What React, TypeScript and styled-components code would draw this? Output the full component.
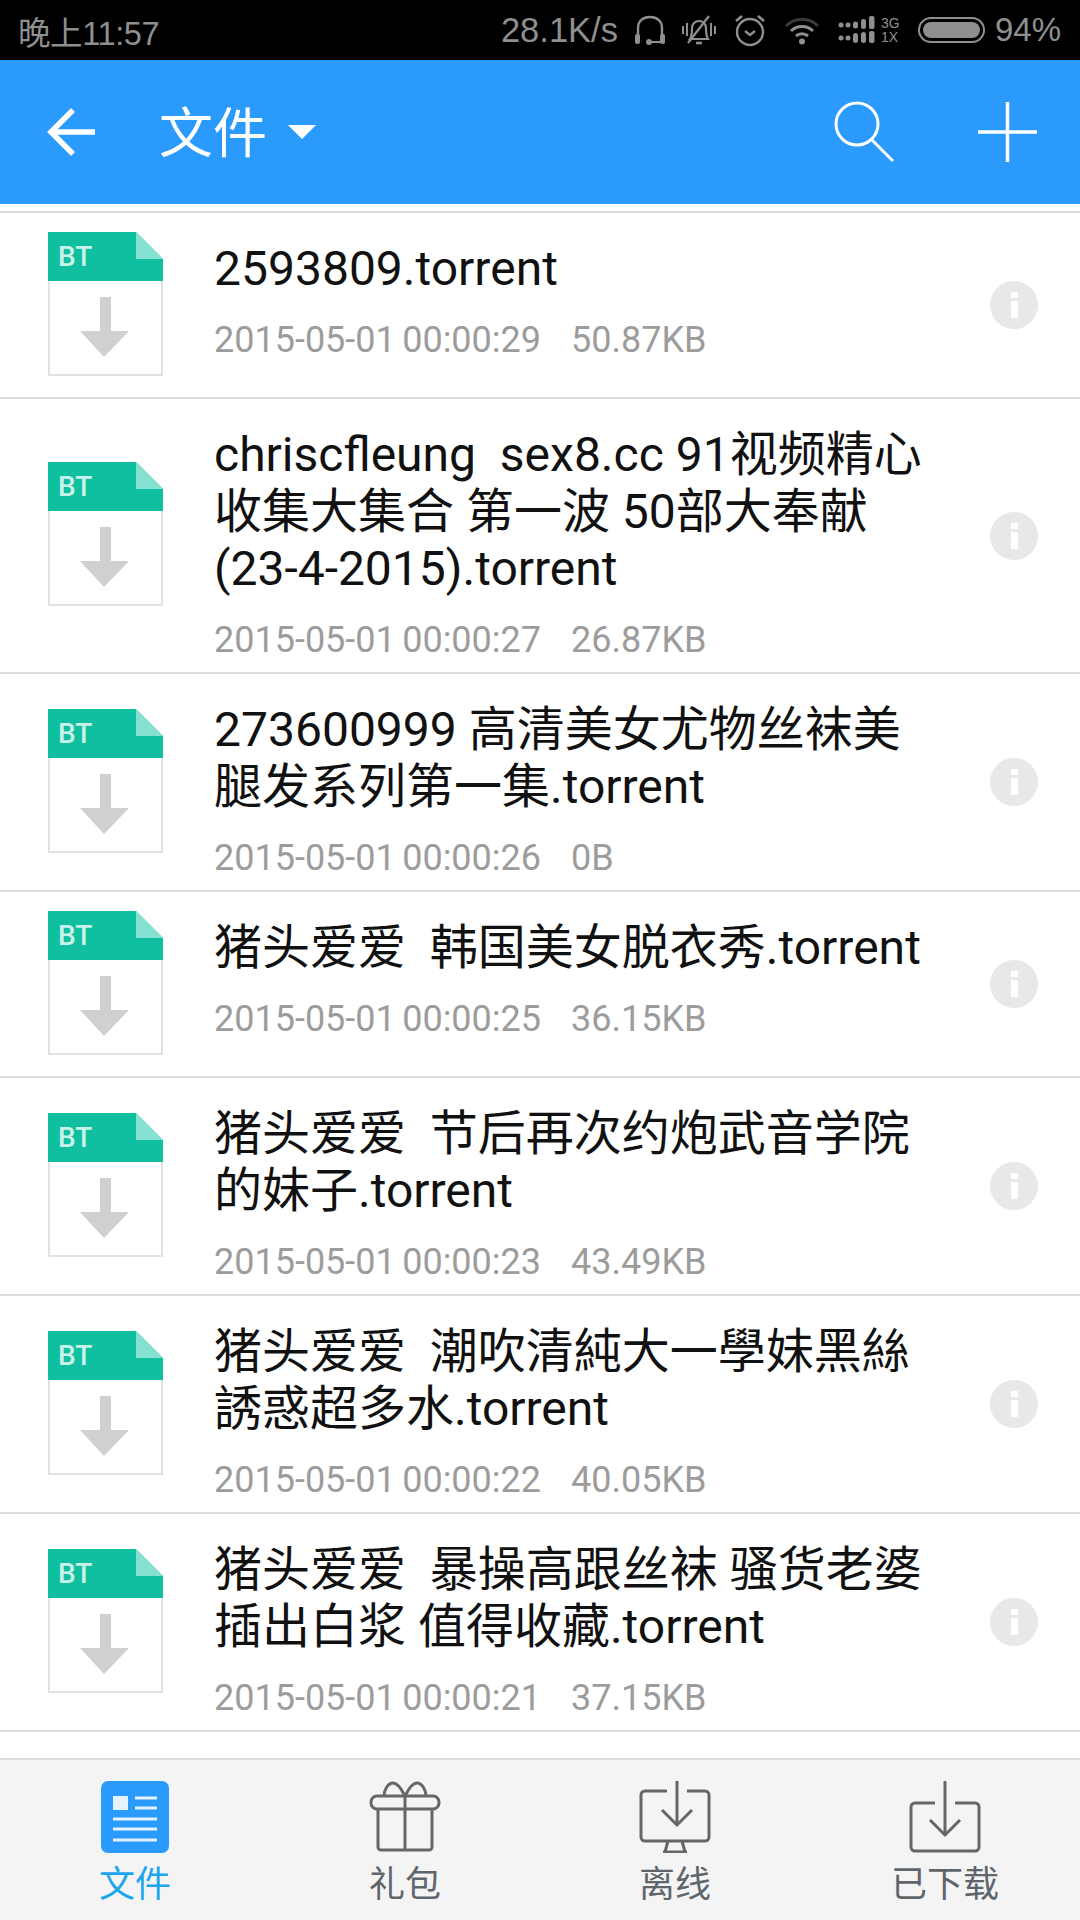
import React from "react";
import styled, { createGlobalStyle } from "styled-components";

const GlobalStyle = createGlobalStyle`
	html, body {
		margin: 0;
		padding: 0;
		width: 1080px;
		height: 1920px;
		overflow: hidden;
		background: #fff;
	}
	* {
		box-sizing: border-box;
	}
`;

const files = [
	{ name: "2593809.torrent", time: "2015-05-01 00:00:29", size: "50.87KB" },
	{ name: "chriscfleung  sex8.cc 91视频精心收集大集合 第一波 50部大奉献(23-4-2015).torrent", time: "2015-05-01 00:00:27", size: "26.87KB" },
	{ name: "273600999 高清美女尤物丝袜美腿发系列第一集.torrent", time: "2015-05-01 00:00:26", size: "0B" },
	{ name: "猪头爱爱  韩国美女脱衣秀.torrent", time: "2015-05-01 00:00:25", size: "36.15KB" },
	{ name: "猪头爱爱  节后再次约炮武音学院的妹子.torrent", time: "2015-05-01 00:00:23", size: "43.49KB" },
	{ name: "猪头爱爱  潮吹清純大一學妹黑絲誘惑超多水.torrent", time: "2015-05-01 00:00:22", size: "40.05KB" },
	{ name: "猪头爱爱  暴操高跟丝袜 骚货老婆插出白浆 值得收藏.torrent", time: "2015-05-01 00:00:21", size: "37.15KB" },
];

const HeadsetIcon = () => (
	<svg width="32" height="32" viewBox="0 0 32 32" fill="none" stroke="#8f8f8f">
		<path d="M4 22V14C4 7 9 3 16 3s12 4 12 11v8" strokeWidth="2.4" />
		<rect x="1" y="20" width="5" height="10" rx="2" fill="#8f8f8f" stroke="none" />
		<rect x="26" y="20" width="5" height="10" rx="2" fill="#8f8f8f" stroke="none" />
		<path d="M17 28h10" strokeWidth="2" />
		<circle cx="15" cy="28" r="3" fill="#8f8f8f" stroke="none" />
	</svg>
);

const BellIcon = () => (
	<svg width="34" height="32" viewBox="0 0 34 32" fill="none" stroke="#8f8f8f" strokeWidth="2.2">
		<path d="M8 25c2-3 2-6 2-11 0-4 3-7 7-7s7 3 7 7c0 5 0 8 2 11z" />
		<path d="M14 29h6" strokeWidth="2.6" />
		<path d="M6 29L27 2" />
		<path d="M1 12v8M5 9v13M29 9v13M33 12v8" strokeWidth="2" />
	</svg>
);

const AlarmIcon = () => (
	<svg width="32" height="34" viewBox="0 0 32 34" fill="none" stroke="#8f8f8f" strokeWidth="2.4">
		<circle cx="16" cy="19" r="13" />
		<path d="M11 18l5 4 5-4" />
		<path d="M2 8l6-5M30 8l-6-5" strokeWidth="2.6" />
	</svg>
);

const WifiIcon = () => (
	<svg width="36" height="30" viewBox="0 0 36 30" fill="none">
		<path d="M2 11C11 2 25 2 34 11" stroke="#3a3a3a" strokeWidth="3" />
		<path d="M7 16c6-6 16-6 22 0" stroke="#8f8f8f" strokeWidth="3" />
		<path d="M12 21c3.500-3 8.500-3 12 0" stroke="#8f8f8f" strokeWidth="3" />
		<circle cx="18" cy="26.500" r="3" fill="#8f8f8f" />
	</svg>
);

const SignalIcon = () => (
	<svg width="37" height="28" viewBox="0 0 37 28" fill="#8f8f8f">
		<circle cx="3" cy="9" r="2.500" />
		<circle cx="10" cy="9" r="2.500" />
		<rect x="15" y="5.500" width="5" height="7" rx="2.500" />
		<rect x="23" y="3" width="5" height="10" rx="2.500" />
		<rect x="31" y="0" width="5.500" height="13" rx="2" />
		<circle cx="3" cy="22" r="2.500" />
		<circle cx="10" cy="22" r="2.500" />
		<rect x="15" y="17" width="5" height="10" rx="2.500" />
		<rect x="23" y="16" width="5" height="11" rx="2.500" />
		<rect x="31" y="15" width="5.500" height="12" rx="2" />
	</svg>
);

const BackIcon = () => (
	<svg width="49" height="48" viewBox="0 0 49 48" fill="none" stroke="#fff" strokeWidth="5.500">
		<path d="M48 24H4" />
		<path d="M26 2L4 24l22 22" />
	</svg>
);

const SearchIcon = () => (
	<svg width="60" height="62" viewBox="0 0 60 62" fill="none" stroke="#fff" strokeWidth="3">
		<circle cx="23" cy="23" r="21" />
		<path d="M37 38l22 22" />
	</svg>
);

const PlusIcon = () => (
	<svg width="60" height="60" viewBox="0 0 60 60" fill="none" stroke="#fff" strokeWidth="3.500">
		<path d="M0 30h59M29.500 0v60" />
	</svg>
);

const FileIcon = () => (
	<svg width="115" height="144" viewBox="0 0 115 144">
		<path d="M1 48h113v95H1z" fill="#fff" stroke="#d9d9d9" strokeWidth="1.500" />
		<path d="M0 0h88l27 27v22H0z" fill="#0fbf9f" />
		<path d="M88 0l27 27H88z" fill="#85e2d2" />
		<text x="10" y="34" fontFamily="Roboto, sans-serif" fontWeight="500" fontSize="28" fill="#c9f3ea">BT</text>
		<path d="M52 65h11v34h18l-25 26-24-26h20z" fill="#d0d0d0" />
	</svg>
);

const FilesTabIcon = () => (
	<svg width="68" height="72" viewBox="0 0 68 72">
		<rect x="0" y="0" width="68" height="72" rx="7" fill="#2a9bfc" />
		<rect x="12" y="15" width="15" height="14" fill="#e6f2fd" />
		<path d="M34 17h22M34 27h22M12 38h44M12 48h44M12 59h44" stroke="#e6f2fd" strokeWidth="3" />
	</svg>
);

const GiftIcon = () => (
	<svg width="72" height="72" viewBox="0 0 72 72" fill="none" stroke="#666" strokeWidth="3">
		<rect x="2" y="15" width="68" height="13" rx="6" />
		<path d="M9 28v38a3 3 0 0 0 3 3h48a3 3 0 0 0 3-3V28" />
		<path d="M36 15v54" />
		<path d="M15 15c0-6 4-13 9-13s9 7 12 13" />
		<path d="M36 15c3-6 7-13 12-13s9 7 9 13" />
	</svg>
);

const MonitorIcon = () => (
	<svg width="72" height="72" viewBox="0 0 72 72" fill="none" stroke="#666" strokeWidth="3">
		<path d="M28 10H6a4 4 0 0 0-4 4v42a4 4 0 0 0 4 4h60a4 4 0 0 0 4-4V14a4 4 0 0 0-4-4H48" />
		<path d="M38 0v44" />
		<path d="M23 29l15 15 15-15" />
		<path d="M29 60l-3 11M43 60l3 11M24 71h24" />
	</svg>
);

const SaveIcon = () => (
	<svg width="72" height="72" viewBox="0 0 72 72" fill="none" stroke="#666" strokeWidth="3">
		<path d="M26 22H6a4 4 0 0 0-4 4v40a4 4 0 0 0 4 4h60a4 4 0 0 0 4-4V26a4 4 0 0 0-4-4H46" />
		<path d="M36 0v54" />
		<path d="M21 39l15 15 15-15" />
	</svg>
);

const tabs = [
	{ label: "文件", icon: <FilesTabIcon />, active: true },
	{ label: "礼包", icon: <GiftIcon />, active: false },
	{ label: "离线", icon: <MonitorIcon />, active: false },
	{ label: "已下载", icon: <SaveIcon />, active: false },
];

const App = () => {
	return (
		<Page>
			<GlobalStyle />
			<StatusBar>
				<Clock>晚上11:57</Clock>
				<StatusGroup>
					<Speed>28.1K/s</Speed>
					<HeadsetSlot>
						<HeadsetIcon />
					</HeadsetSlot>
					<BellIcon />
					<AlarmIcon />
					<WifiIcon />
					<SignalGroup>
						<SignalIcon />
						<NetworkLabel>
							<span>3G</span>
							<span>1X</span>
						</NetworkLabel>
					</SignalGroup>
					<Battery>
						<BatteryFill />
					</Battery>
					<Percent>94%</Percent>
				</StatusGroup>
			</StatusBar>
			<AppBar>
				<TitleGroup>
					<BackIcon />
					<Title>文件</Title>
					<Caret />
				</TitleGroup>
				<Actions>
					<SearchIcon />
					<PlusIcon />
				</Actions>
			</AppBar>
			<List>
				{files.map((file) => (
					<Row key={file.time}>
						<IconCell>
							<FileIcon />
						</IconCell>
						<RowText>
							<FileName>{file.name}</FileName>
							<Meta>
								<span>{file.time}</span>
								<span>{file.size}</span>
							</Meta>
						</RowText>
						<InfoButton>
							<InfoDot />
							<InfoStem />
						</InfoButton>
					</Row>
				))}
			</List>
			<TabBar>
				{tabs.map((tab) => (
					<Tab key={tab.label}>
						{tab.icon}
						<TabLabel $active={tab.active}>{tab.label}</TabLabel>
					</Tab>
				))}
			</TabBar>
		</Page>
	);
};

const Page = styled.div`
	width: 1080px;
	height: 1920px;
	display: flex;
	flex-direction: column;
	font-family: Roboto, "Noto Sans CJK SC", sans-serif;
	background: #fff;
`;

const StatusBar = styled.div`
	height: 60px;
	flex: none;
	background: #000;
	color: #8f8f8f;
	display: flex;
	align-items: center;
	justify-content: space-between;
	padding: 0 19px 0 18px;
	font-family: "Liberation Sans", "Noto Sans CJK SC", sans-serif;
`;

const Clock = styled.div`
	font-size: 32.500px;
	letter-spacing: -0.4px;
`;

const StatusGroup = styled.div`
	display: flex;
	align-items: center;
	gap: 18px;
`;

const Speed = styled.div`
	font-size: 34.500px;
	margin-right: -2px;
`;

const HeadsetSlot = styled.div`
	display: flex;
	margin-right: -2px;
`;

const SignalGroup = styled.div`
	display: flex;
	align-items: center;
	gap: 6px;
`;

const NetworkLabel = styled.div`
	display: flex;
	flex-direction: column;
	font-size: 14px;
	line-height: 14px;
	width: 21px;
`;

const Battery = styled.div`
	width: 67px;
	height: 26px;
	border: 2px solid #8f8f8f;
	border-radius: 13px;
	padding: 3px;
	margin-left: -2px;
`;

const BatteryFill = styled.div`
	width: 100%;
	height: 100%;
	background: #8f8f8f;
	border-radius: 8px;
`;

const Percent = styled.div`
	font-size: 33px;
	margin-left: -8px;
`;

const AppBar = styled.div`
	height: 144px;
	flex: none;
	background: #2a9bfc;
	display: flex;
	align-items: center;
	justify-content: space-between;
	padding: 0 42px 0 47px;
`;

const TitleGroup = styled.div`
	display: flex;
	align-items: center;
`;

const Title = styled.div`
	font-size: 54px;
	color: #fff;
	margin: 0 0 6px 63px;
`;

const Caret = styled.div`
	width: 0;
	height: 0;
	margin-left: 21px;
	border-left: 14px solid transparent;
	border-right: 14px solid transparent;
	border-top: 14px solid #fff;
`;

const Actions = styled.div`
	display: flex;
	align-items: center;
	gap: 84px;
`;

const List = styled.div`
	flex: 1;
	padding-top: 7px;
`;

const Row = styled.div`
	display: flex;
	align-items: center;
	min-height: 186px;
	padding: 0 42px 0 48px;
	border-top: 2px solid #dcdcdc;

	&:last-child {
		border-bottom: 2px solid #dcdcdc;
	}
`;

const IconCell = styled.div`
	flex: none;
	display: flex;
	margin-bottom: 3px;
`;

const RowText = styled.div`
	flex: 1;
	align-self: flex-start;
	min-width: 0;
	margin-left: 51px;
	padding: 27px 0 12px;
`;

const FileName = styled.div`
	font-size: 48px;
	line-height: 57px;
	color: #111;
	white-space: pre-wrap;
`;

const Meta = styled.div`
	display: flex;
	gap: 30px;
	margin-top: 23px;
	font-size: 36px;
	line-height: 40px;
	word-spacing: -2.500px;
	color: #9c9c9c;
`;

const InfoButton = styled.div`
	flex: none;
	width: 48px;
	height: 48px;
	margin-left: 56px;
	border-radius: 50%;
	background: #e8e8e8;
	display: flex;
	flex-direction: column;
	align-items: center;
	justify-content: center;
	gap: 3px;
`;

const InfoDot = styled.div`
	width: 7px;
	height: 6px;
	background: #fff;
`;

const InfoStem = styled.div`
	width: 7px;
	height: 17px;
	background: #fff;
`;

const TabBar = styled.div`
	height: 162px;
	flex: none;
	display: grid;
	grid-template-columns: repeat(4, 1fr);
	background: #f4f4f4;
	border-top: 2px solid #dcdcdc;
	padding-top: 21px;
`;

const Tab = styled.div`
	display: flex;
	flex-direction: column;
	align-items: center;
`;

const TabLabel = styled.div<{ $active: boolean }>`
	font-size: 36px;
	line-height: 40px;
	margin-top: 12px;
	color: ${(props) => (props.$active ? "#1aa5ee" : "#5e656b")};
`;

export default App;
